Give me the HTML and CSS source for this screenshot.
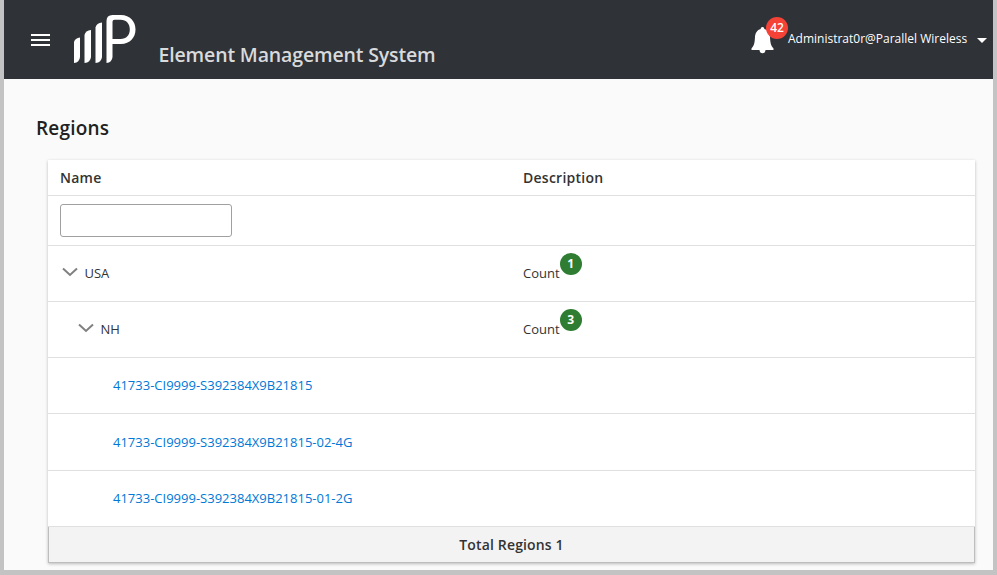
FILE: index.html
```
<!DOCTYPE html>
<html lang="en">
<head>
<meta charset="utf-8">
<title>Element Management System</title>
<link rel="stylesheet" href="styles.css">
</head>
<body>
<div class="frame">
  <header class="topbar">
    <button class="menu" aria-label="Menu"><span></span><span></span><span></span></button>
    <svg class="logo" width="62" height="50" viewBox="0 0 62 50" fill="#fff">
      <path d="M0 49V28Q1 24 6 23.500V43Q5.500 48.500 0 49Z"/>
      <path d="M10.500 49V21Q11.500 16.500 17 16V43Q16.500 48.500 10.500 49Z"/>
      <path d="M21.500 49V13.500Q22.500 9 28 8.500V43Q27.500 48.500 21.500 49Z"/>
      <path fill-rule="evenodd" d="M32.500 49V7Q32.500 1 38.500 1H47C56 1 61.500 7.500 61.500 15.500S56 30 47 30H38.500V43Q38 48.500 32.500 49ZM38.500 25H46.500C52.500 25 55.800 21 55.800 15.500S52.500 5.800 46.500 5.800H40.500Q38.500 5.800 38.500 7.800Z"/>
    </svg>
    <span class="product">Element Management System</span>
    <div class="bell">
      <svg width="24" height="28" viewBox="0 0 24 28" fill="#fff">
        <path d="M12.500 1C13.600 1 14.300 1.800 14.300 3C18 4 19.700 7 20 11C20.300 16.500 20.800 19.500 23.500 22.500V24H1.500V22.500C4.200 19.500 4.700 16.500 5 11C5.300 7 7 4 10.700 3C10.700 1.800 11.400 1 12.500 1Z"/>
        <path d="M9.500 24H15.500C15.500 26 14.200 27.300 12.500 27.300S9.500 26 9.500 24Z"/>
      </svg>
      <span class="alerts">42</span>
    </div>
    <span class="user">Administrat0r@Parallel Wireless</span>
    <svg class="caret" width="10" height="5" viewBox="0 0 10 5"><path d="M0 0H10L5 5Z" fill="#fff"/></svg>
  </header>
  <main>
    <h1>Regions</h1>
    <div class="table">
      <div class="row head"><div class="cell">Name</div><div class="cell desc">Description</div></div>
      <div class="row filter"><div class="cell"><input type="text" aria-label="Filter by name"></div></div>
      <div class="row">
        <div class="cell node"><svg class="chevron" width="16" height="10" viewBox="0 0 16 10"><path d="M1 1.500L8 8L15 1.500"/></svg><span>USA</span></div>
        <div class="cell count"><span>Count</span><b>1</b></div>
      </div>
      <div class="row">
        <div class="cell node child"><svg class="chevron" width="16" height="10" viewBox="0 0 16 10"><path d="M1 1.500L8 8L15 1.500"/></svg><span>NH</span></div>
        <div class="cell count"><span>Count</span><b>3</b></div>
      </div>
      <div class="row"><a class="leaf">41733-CI9999-S392384X9B21815</a></div>
      <div class="row tall"><a class="leaf">41733-CI9999-S392384X9B21815-02-4G</a></div>
      <div class="row"><a class="leaf">41733-CI9999-S392384X9B21815-01-2G</a></div>
      <div class="total">Total Regions 1</div>
    </div>
  </main>
</div>
</body>
</html>
```
FILE: styles.css
```
* { box-sizing: border-box; }
body {
  margin: 0;
  font-family: "Open Sans", sans-serif;
  font-size: 13px;
  color: #333;
  background: #c3c3c3;
}
.frame {
  height: 570px;
  margin: 0 4px;
  background: #fafafa;
  overflow: hidden;
}
.topbar {
  display: flex;
  height: 79px;
  background: #2f3237;
  color: #fff;
}
.menu {
  display: grid;
  gap: 3px;
  align-content: start;
  width: 19px;
  margin: 34px 0 0 27px;
  padding: 0;
  border: 0;
  background: none;
}
.menu span { height: 2px; background: #fff; }
.logo { margin: 14px 0 0 24px; }
.product {
  margin: 41px 0 0 22.500px;
  font-size: 19.500px;
  line-height: 28px;
  font-weight: 600;
  letter-spacing: -.15px;
  color: #d9dadb;
  white-space: nowrap;
}
.bell {
  position: relative;
  height: 28px;
  margin: 26px 0 0 auto;
}
.bell svg { display: block; }
.alerts {
  position: absolute;
  left: 16px;
  top: -9px;
  width: 22px;
  height: 22px;
  border-radius: 50%;
  background: #f44336;
  font-size: 12px;
  line-height: 21px;
  font-weight: 600;
  text-align: center;
}
.user {
  width: 180px;
  margin: 30px 0 0 14px;
  font-size: 12px;
  line-height: 18px;
  white-space: nowrap;
}
.caret { margin: 38px 6px 0 9px; }
main { padding: 35px 18px 0 32px; }
h1 {
  margin: 0;
  font-size: 19px;
  line-height: 28px;
  font-weight: 600;
  letter-spacing: .18px;
  color: #212121;
}
.table {
  margin: 18px 0 0 12px;
  background: #fff;
  box-shadow: 0 1px 3px rgba(0, 0, 0, .25);
}
.row {
  display: grid;
  grid-template-columns: 463px 1fr;
  align-items: center;
  height: 56px;
  padding-bottom: 2px;
  border-bottom: 1px solid #e0e0e0;
}
.tall { height: 57px; padding-bottom: 0; }
.cell { padding-left: 12px; }
.head {
  height: 36px;
  padding-bottom: 0;
  font-size: 14px;
  font-weight: 600;
  letter-spacing: .25px;
}
.filter { height: 50px; padding-bottom: 0; }
.filter input {
  display: block;
  width: 172px;
  height: 33px;
  border: 1px solid #a0a0a0;
  border-radius: 3px;
  background: #fff;
}
.node { display: flex; align-items: center; gap: 6.500px; padding-left: 14px; }
.child { padding-left: 30px; }
.chevron {
  margin-top: -1px;
  fill: none;
  stroke: #808080;
  stroke-width: 2;
}
.count { display: flex; align-items: center; }
.count b {
  width: 22px;
  height: 22px;
  margin-top: -18px;
  border-radius: 50%;
  background: #2e7d32;
  color: #fff;
  font-size: 12px;
  line-height: 21px;
  font-weight: 700;
  text-align: center;
}
.leaf { padding-left: 65px; color: #0078d7; }
.total {
  height: 36px;
  border: 1px solid #bdbdbd;
  border-top: 0;
  background: #f3f3f3;
  font-size: 14px;
  line-height: 36px;
  font-weight: 600;
  letter-spacing: .15px;
  text-align: center;
}
```
